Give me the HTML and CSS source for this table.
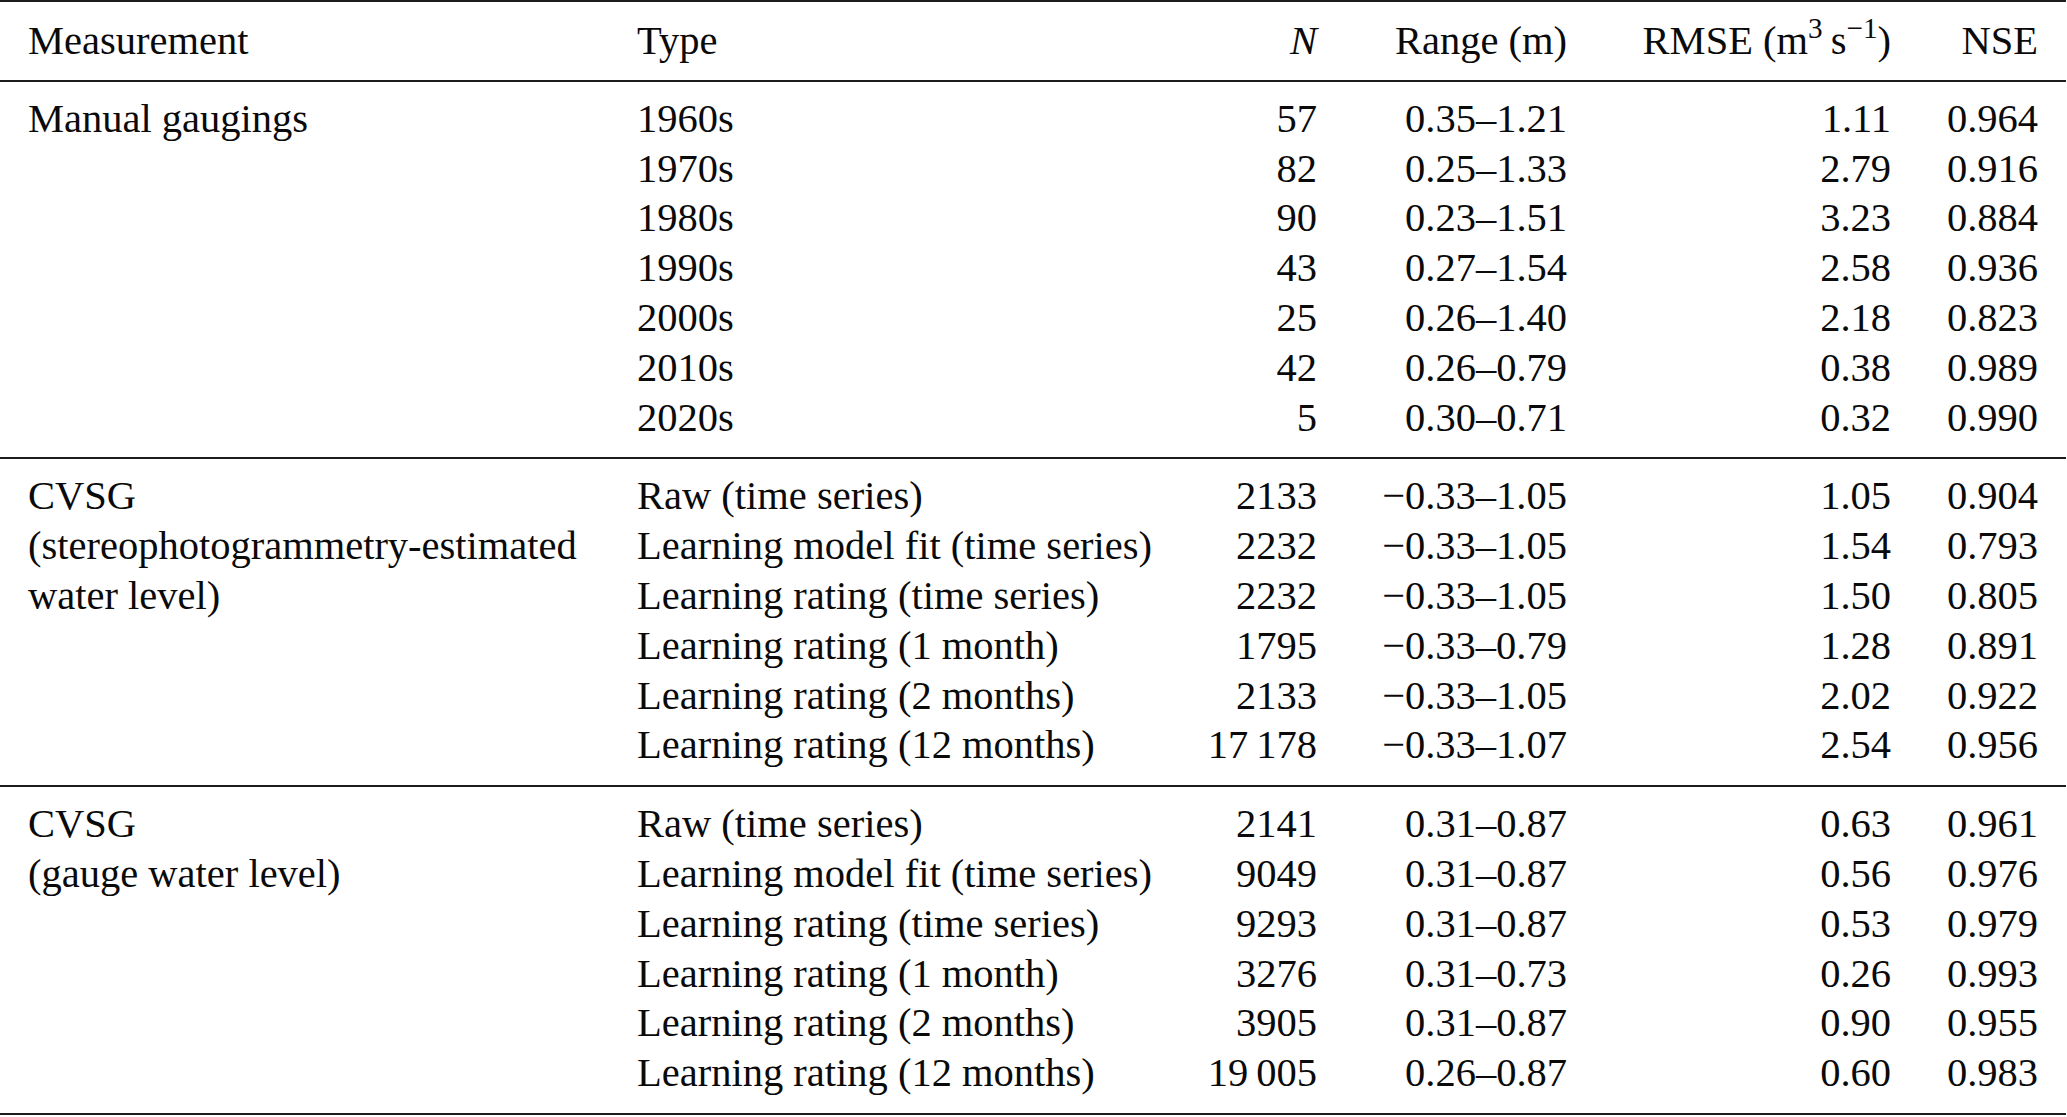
FILE: index.html
```html
<!DOCTYPE html>
<html lang="en">
<head>
<meta charset="utf-8">
<title>Rating curve evaluation</title>
<link rel="stylesheet" href="styles.css">
</head>
<body>
<div class="table">
  <div class="section head">
    <div class="cell">Measurement</div>
    <div class="cell">Type</div>
    <div class="cell num"><i>N</i></div>
    <div class="cell num">Range (m)</div>
    <div class="cell num">RMSE (m<sup>3</sup>&#8201;s<sup>&minus;1</sup>)</div>
    <div class="cell num">NSE</div>
  </div>

  <div class="section">
    <div class="cell meas span7">Manual gaugings</div>
    <div class="cell">1960s</div><div class="cell num">57</div><div class="cell num">0.35–1.21</div><div class="cell num">1.11</div><div class="cell num">0.964</div>
    <div class="cell">1970s</div><div class="cell num">82</div><div class="cell num">0.25–1.33</div><div class="cell num">2.79</div><div class="cell num">0.916</div>
    <div class="cell">1980s</div><div class="cell num">90</div><div class="cell num">0.23–1.51</div><div class="cell num">3.23</div><div class="cell num">0.884</div>
    <div class="cell">1990s</div><div class="cell num">43</div><div class="cell num">0.27–1.54</div><div class="cell num">2.58</div><div class="cell num">0.936</div>
    <div class="cell">2000s</div><div class="cell num">25</div><div class="cell num">0.26–1.40</div><div class="cell num">2.18</div><div class="cell num">0.823</div>
    <div class="cell">2010s</div><div class="cell num">42</div><div class="cell num">0.26–0.79</div><div class="cell num">0.38</div><div class="cell num">0.989</div>
    <div class="cell">2020s</div><div class="cell num">5</div><div class="cell num">0.30–0.71</div><div class="cell num">0.32</div><div class="cell num">0.990</div>
  </div>

  <div class="section">
    <div class="cell meas span6">CVSG<br>(stereophotogrammetry-estimated<br>water level)</div>
    <div class="cell">Raw (time series)</div><div class="cell num">2133</div><div class="cell num">&minus;0.33–1.05</div><div class="cell num">1.05</div><div class="cell num">0.904</div>
    <div class="cell">Learning model fit (time series)</div><div class="cell num">2232</div><div class="cell num">&minus;0.33–1.05</div><div class="cell num">1.54</div><div class="cell num">0.793</div>
    <div class="cell">Learning rating (time series)</div><div class="cell num">2232</div><div class="cell num">&minus;0.33–1.05</div><div class="cell num">1.50</div><div class="cell num">0.805</div>
    <div class="cell">Learning rating (1 month)</div><div class="cell num">1795</div><div class="cell num">&minus;0.33–0.79</div><div class="cell num">1.28</div><div class="cell num">0.891</div>
    <div class="cell">Learning rating (2 months)</div><div class="cell num">2133</div><div class="cell num">&minus;0.33–1.05</div><div class="cell num">2.02</div><div class="cell num">0.922</div>
    <div class="cell">Learning rating (12 months)</div><div class="cell num">17&#8201;178</div><div class="cell num">&minus;0.33–1.07</div><div class="cell num">2.54</div><div class="cell num">0.956</div>
  </div>

  <div class="section">
    <div class="cell meas span6">CVSG<br>(gauge water level)</div>
    <div class="cell">Raw (time series)</div><div class="cell num">2141</div><div class="cell num">0.31–0.87</div><div class="cell num">0.63</div><div class="cell num">0.961</div>
    <div class="cell">Learning model fit (time series)</div><div class="cell num">9049</div><div class="cell num">0.31–0.87</div><div class="cell num">0.56</div><div class="cell num">0.976</div>
    <div class="cell">Learning rating (time series)</div><div class="cell num">9293</div><div class="cell num">0.31–0.87</div><div class="cell num">0.53</div><div class="cell num">0.979</div>
    <div class="cell">Learning rating (1 month)</div><div class="cell num">3276</div><div class="cell num">0.31–0.73</div><div class="cell num">0.26</div><div class="cell num">0.993</div>
    <div class="cell">Learning rating (2 months)</div><div class="cell num">3905</div><div class="cell num">0.31–0.87</div><div class="cell num">0.90</div><div class="cell num">0.955</div>
    <div class="cell">Learning rating (12 months)</div><div class="cell num">19&#8201;005</div><div class="cell num">0.26–0.87</div><div class="cell num">0.60</div><div class="cell num">0.983</div>
  </div>
</div>
</body>
</html>
```
FILE: styles.css
```css
html, body {
  margin: 0;
  padding: 0;
  background: #ffffff;
}

body {
  font-family: "Liberation Serif", "Times New Roman", serif;
  font-size: 40.5px;
  color: #0a0a0a;
}

.table {
  width: 2066px;
  border-top: 2px solid #1c1c1c;
}

.section {
  display: grid;
  grid-template-columns: 609px 480px 200px 250px 324px 147px;
  grid-auto-rows: 49.8px;
  line-height: 49.8px;
  padding: 12px 28px 15px 28px;
  border-bottom: 2px solid #1c1c1c;
}

.section.head {
  padding-top: 14px;
  padding-bottom: 14px;
}

.cell {
  white-space: nowrap;
}

.num {
  text-align: right;
}

.meas {
  grid-column: 1;
}

.span7 {
  grid-row: 1 / span 7;
}

.span6 {
  grid-row: 1 / span 6;
}

sup {
  font-size: 0.72em;
  line-height: 0;
  vertical-align: 0.55em;
}
```
